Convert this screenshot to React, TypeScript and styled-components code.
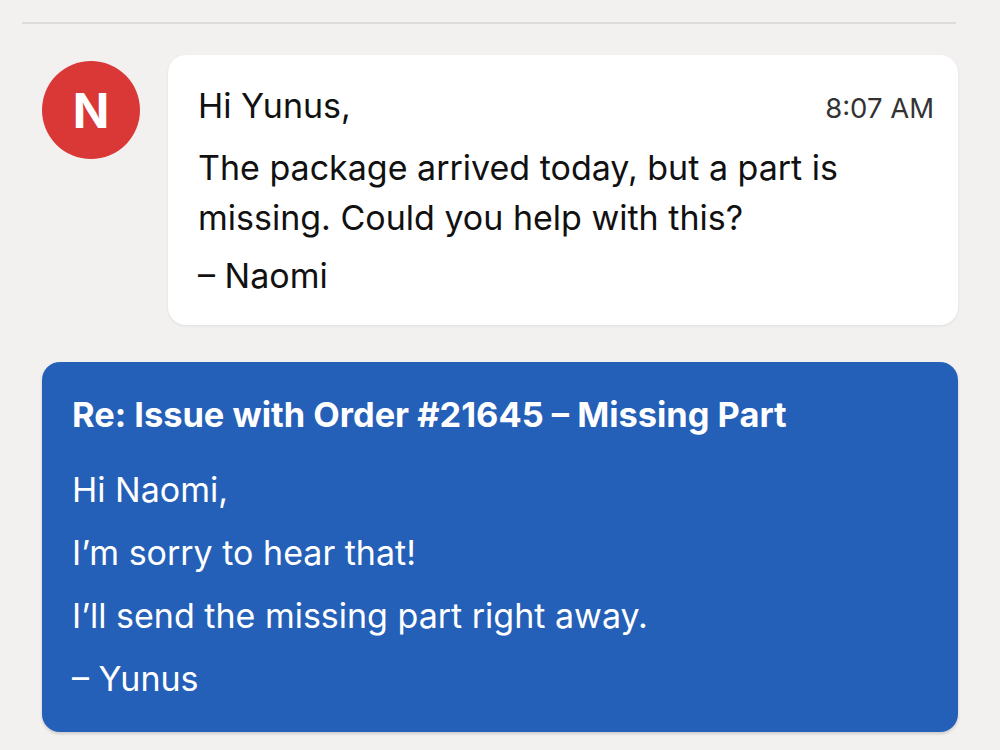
import styled, { createGlobalStyle } from "styled-components";

const GlobalStyle = createGlobalStyle`
  html, body {
    margin: 0;
    padding: 0;
    background: #f2f1f0;
    font-family: Inter, "Noto Sans", "Liberation Sans", sans-serif;
  }
`;

export default function App() {
  return (
    <>
      <GlobalStyle />
      <Page>
        <Divider />
        <IncomingRow>
          <Avatar>N</Avatar>
          <IncomingCard>
            <CardHead>
              <Line>Hi Yunus,</Line>
              <Time>8:07 AM</Time>
            </CardHead>
            <Body>
              <Line>The package arrived today, but a part is missing. Could you help with this?</Line>
              <Line>– Naomi</Line>
            </Body>
          </IncomingCard>
        </IncomingRow>
        <ReplyCard>
          <Subject>Re: Issue with Order #21645 – Missing Part</Subject>
          <ReplyBody>
            <Line>Hi Naomi,</Line>
            <Line>I’m sorry to hear that!</Line>
            <Line>I’ll send the missing part right away.</Line>
            <Line>– Yunus</Line>
          </ReplyBody>
        </ReplyCard>
      </Page>
    </>
  );
}

const Page = styled.main`
  width: 1000px;
  height: 750px;
  padding: 22px 42px 0 42px;
  box-sizing: border-box;
  display: flex;
  flex-direction: column;
  overflow: hidden;
`;

const Divider = styled.hr`
  margin: 0 2px 0 -20px;
  border: none;
  height: 2px;
  background: #dedcdb;
`;

const IncomingRow = styled.section`
  display: flex;
  align-items: flex-start;
  gap: 28px;
  margin-top: 31px;
`;

const Avatar = styled.div`
  flex: none;
  width: 98px;
  height: 98px;
  margin-top: 6px;
  border-radius: 50%;
  background: #da3837;
  color: #ffffff;
  font-size: 48px;
  font-weight: 700;
  display: flex;
  align-items: center;
  justify-content: center;
`;

const IncomingCard = styled.article`
  flex: 1;
  height: 270px;
  box-sizing: border-box;
  background: #ffffff;
  border-radius: 18px;
  box-shadow: 0 1px 3px rgba(0, 0, 0, 0.08);
  padding: 26px 24px 0 30px;
  color: #111111;
`;

const CardHead = styled.div`
  display: flex;
  justify-content: space-between;
  align-items: baseline;
`;

const Time = styled.span`
  font-size: 27.5px;
  color: #333333;
`;

const Body = styled.div`
  margin-top: 12px;
  max-width: 680px;
  display: flex;
  flex-direction: column;
  gap: 8px;
`;

const Line = styled.p`
  margin: 0;
  font-size: 34px;
  line-height: 50px;
`;

const ReplyCard = styled.article`
  margin-top: 37px;
  height: 370px;
  box-sizing: border-box;
  background: #2560b8;
  border-radius: 18px;
  box-shadow: 0 2px 3px rgba(0, 0, 0, 0.15);
  padding: 32px 30px 0 30px;
  color: #ffffff;
`;

const Subject = styled.h2`
  margin: 0;
  font-size: 34.4px;
  font-weight: 700;
  line-height: 42px;
`;

const ReplyBody = styled.div`
  margin-top: 29px;
  display: flex;
  flex-direction: column;
  gap: 13px;
`;
